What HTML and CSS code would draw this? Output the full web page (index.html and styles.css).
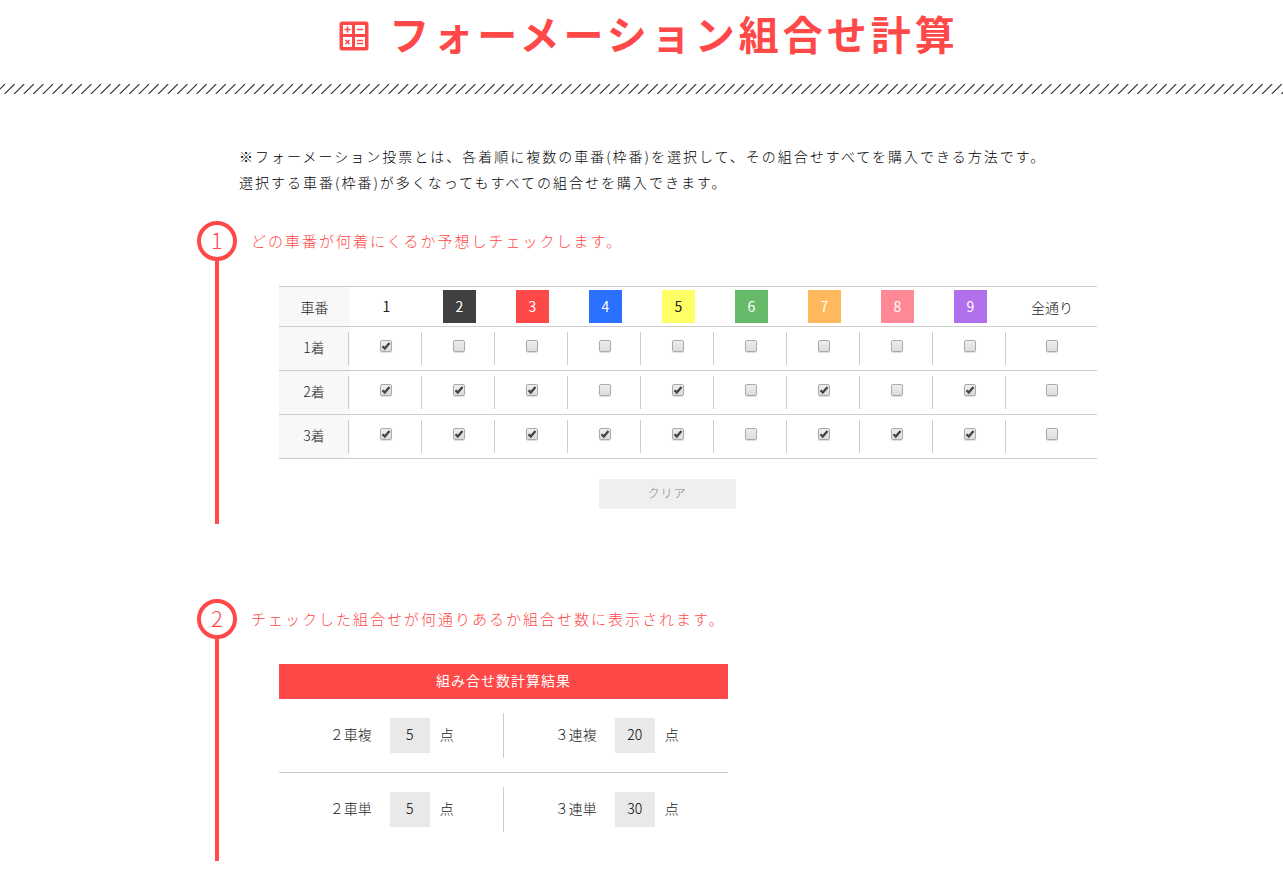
FILE: index.html
```html
<!DOCTYPE html>
<html lang="ja">
<head>
  <meta charset="UTF-8">
  <meta name="viewport" content="width=device-width, initial-scale=1.0">
  <title>フォーメーション組合せ計算</title>
  <link rel="stylesheet" href="styles.css">
</head>
<body>
  <header>
    <h1 class="title">
      <svg class="title-icon" viewBox="0 0 30 30" aria-hidden="true">
        <rect x="0.5" y="0.5" width="29" height="29" rx="2.5" fill="#ff4848"/>
        <path fill="#fff" d="M4 4h9v9H4zM16 4h10v9H16zM4 16h9v10H4zM16 16h10v10H16z"/>
        <path fill="none" stroke="#ff4848" stroke-width="1.6" d="M5.5 8.5h6M8.5 5.5v6M18 8.5h6M18 19.5h6M18 22.5h6M6.5 19l4 4M10.5 19l-4 4"/>
      </svg>
      <span>フォーメーション組合せ計算</span>
    </h1>
    <svg class="stripe" aria-hidden="true">
      <defs>
        <pattern id="stripe" width="48" height="10" patternUnits="userSpaceOnUse">
          <path stroke="#333" stroke-width="1.1" d="M5 0l-10 10M14.6 0l-10 10M24.2 0l-10 10M33.8 0l-10 10M43.4 0l-10 10M53 0l-10 10"/>
        </pattern>
      </defs>
      <rect width="100%" height="10" fill="url(#stripe)"/>
    </svg>
  </header>

  <main class="container">
    <p class="lead">※フォーメーション投票とは、各着順に複数の車番(枠番)を選択して、その組合せすべてを購入できる方法です。<br>選択する車番(枠番)が多くなってもすべての組合せを購入できます。</p>

    <section class="step">
      <div class="marker"><span class="number">1</span></div>
      <div class="step-body">
        <h2>どの車番が何着にくるか予想しチェックします。</h2>
        <form id="picks">
          <div class="indent">
            <table class="picks">
              <thead>
                <tr>
                  <th class="rank" scope="col">車番</th>
                  <th scope="col"><span class="car">1</span></th>
                  <th scope="col"><span class="car black">2</span></th>
                  <th scope="col"><span class="car red">3</span></th>
                  <th scope="col"><span class="car blue">4</span></th>
                  <th scope="col"><span class="car yellow">5</span></th>
                  <th scope="col"><span class="car green">6</span></th>
                  <th scope="col"><span class="car orange">7</span></th>
                  <th scope="col"><span class="car pink">8</span></th>
                  <th scope="col"><span class="car purple">9</span></th>
                  <th class="all" scope="col">全通り</th>
                </tr>
              </thead>
              <tbody>
                <tr>
                  <th class="rank" scope="row"><div class="cell">1着</div></th>
                  <td><div class="cell"><input type="checkbox" aria-label="1着 1" checked></div></td>
                  <td><div class="cell"><input type="checkbox" aria-label="1着 2"></div></td>
                  <td><div class="cell"><input type="checkbox" aria-label="1着 3"></div></td>
                  <td><div class="cell"><input type="checkbox" aria-label="1着 4"></div></td>
                  <td><div class="cell"><input type="checkbox" aria-label="1着 5"></div></td>
                  <td><div class="cell"><input type="checkbox" aria-label="1着 6"></div></td>
                  <td><div class="cell"><input type="checkbox" aria-label="1着 7"></div></td>
                  <td><div class="cell"><input type="checkbox" aria-label="1着 8"></div></td>
                  <td><div class="cell"><input type="checkbox" aria-label="1着 9"></div></td>
                  <td class="all"><div class="cell"><input type="checkbox" aria-label="1着 全通り"></div></td>
                </tr>
                <tr>
                  <th class="rank" scope="row"><div class="cell">2着</div></th>
                  <td><div class="cell"><input type="checkbox" aria-label="2着 1" checked></div></td>
                  <td><div class="cell"><input type="checkbox" aria-label="2着 2" checked></div></td>
                  <td><div class="cell"><input type="checkbox" aria-label="2着 3" checked></div></td>
                  <td><div class="cell"><input type="checkbox" aria-label="2着 4"></div></td>
                  <td><div class="cell"><input type="checkbox" aria-label="2着 5" checked></div></td>
                  <td><div class="cell"><input type="checkbox" aria-label="2着 6"></div></td>
                  <td><div class="cell"><input type="checkbox" aria-label="2着 7" checked></div></td>
                  <td><div class="cell"><input type="checkbox" aria-label="2着 8"></div></td>
                  <td><div class="cell"><input type="checkbox" aria-label="2着 9" checked></div></td>
                  <td class="all"><div class="cell"><input type="checkbox" aria-label="2着 全通り"></div></td>
                </tr>
                <tr>
                  <th class="rank" scope="row"><div class="cell">3着</div></th>
                  <td><div class="cell"><input type="checkbox" aria-label="3着 1" checked></div></td>
                  <td><div class="cell"><input type="checkbox" aria-label="3着 2" checked></div></td>
                  <td><div class="cell"><input type="checkbox" aria-label="3着 3" checked></div></td>
                  <td><div class="cell"><input type="checkbox" aria-label="3着 4" checked></div></td>
                  <td><div class="cell"><input type="checkbox" aria-label="3着 5" checked></div></td>
                  <td><div class="cell"><input type="checkbox" aria-label="3着 6"></div></td>
                  <td><div class="cell"><input type="checkbox" aria-label="3着 7" checked></div></td>
                  <td><div class="cell"><input type="checkbox" aria-label="3着 8" checked></div></td>
                  <td><div class="cell"><input type="checkbox" aria-label="3着 9" checked></div></td>
                  <td class="all"><div class="cell"><input type="checkbox" aria-label="3着 全通り"></div></td>
                </tr>
              </tbody>
            </table>
          </div>
          <button type="button" class="clear" onclick="clearAll()">クリア</button>
        </form>
      </div>
    </section>

    <section class="step">
      <div class="marker"><span class="number">2</span></div>
      <div class="step-body">
        <h2>チェックした組合せが何通りあるか組合せ数に表示されます。</h2>
        <div class="indent">
          <div class="results">
            <h3>組み合せ数計算結果</h3>
            <div class="result-row">
              <div class="result">
                <label for="quinella">２車複</label>
                <input type="text" id="quinella" value="5" readonly>
                <span>点</span>
              </div>
              <div class="result">
                <label for="trio">３連複</label>
                <input type="text" id="trio" value="20" readonly>
                <span>点</span>
              </div>
            </div>
            <div class="result-row">
              <div class="result">
                <label for="exacta">２車単</label>
                <input type="text" id="exacta" value="5" readonly>
                <span>点</span>
              </div>
              <div class="result">
                <label for="trifecta">３連単</label>
                <input type="text" id="trifecta" value="30" readonly>
                <span>点</span>
              </div>
            </div>
          </div>
        </div>
      </div>
    </section>
  </main>

  <script>
    const form = document.getElementById("picks");
    const rows = [...form.querySelectorAll("tbody tr")].map(tr => [...tr.querySelectorAll("input")]);

    function calculate() {
      const [first, second, third] = rows.map(row => row.slice(0, 9).map((box, i) => box.checked ? i + 1 : 0).filter(Boolean));
      const exacta = new Set(), quinella = new Set(), trifecta = new Set(), trio = new Set();
      for (const a of first) {
        for (const b of second) {
          if (a === b) continue;
          exacta.add([a, b].join());
          quinella.add([a, b].sort().join());
          for (const c of third) {
            if (c === a || c === b) continue;
            trifecta.add([a, b, c].join());
            trio.add([a, b, c].sort().join());
          }
        }
      }
      document.getElementById("exacta").value = exacta.size;
      document.getElementById("quinella").value = quinella.size;
      document.getElementById("trifecta").value = trifecta.size;
      document.getElementById("trio").value = trio.size;
    }

    function clearAll() {
      rows.flat().forEach(box => box.checked = false);
      calculate();
    }

    rows.forEach(row => {
      row[9].addEventListener("change", () => {
        row.forEach(box => box.checked = row[9].checked);
      });
    });
    form.addEventListener("change", calculate);
  </script>
</body>
</html>
```
FILE: styles.css
```css
* {
  box-sizing: border-box;
}
body {
  margin: 0;
  background-color: #fff;
  color: #222;
  font-family: "Noto Sans CJK JP", sans-serif;
  font-weight: 300;
  font-size: 14px;
}
h1, h2, h3, p {
  margin: 0;
}
.title {
  display: flex;
  justify-content: center;
  align-items: center;
  height: 72px;
  padding-left: 15px;
  gap: 20px;
  color: #ff4848;
  font-size: 40px;
  font-weight: 700;
  line-height: 60px;
  letter-spacing: 4px;
}
.title span {
  padding-bottom: 6px;
}
.title-icon {
  width: 30px;
  height: 30px;
}
.stripe {
  display: block;
  width: 100%;
  height: 10px;
  margin-top: 12px;
}
.container {
  max-width: 911px;
  margin: 0 auto;
  padding: 49px 0 32px 11px;
}
.lead {
  padding-left: 42px;
  margin-bottom: 26px;
  color: #000;
  line-height: 26px;
  letter-spacing: 2px;
}
.step {
  display: flex;
}
.step + .step {
  margin-top: 75px;
}
.marker {
  display: flex;
  flex-direction: column;
  align-items: center;
  width: 40px;
}
.marker::after {
  content: "";
  flex: 1;
  width: 4px;
  background-color: #ff4848;
}
.number {
  width: 40px;
  height: 40px;
  border: 4px solid #ff4848;
  border-radius: 50%;
  color: #ff4848;
  font-size: 22px;
  line-height: 29px;
  text-align: center;
}
.step-body {
  flex: 1;
  padding-bottom: 15px;
}
.step h2 {
  margin: 0 0 25px 14px;
  color: #ff4848;
  font-size: 15px;
  font-weight: 300;
  line-height: 40px;
  letter-spacing: 2px;
}
.indent {
  padding-left: 42px;
}

/* picks */
.picks {
  width: 100%;
  border-collapse: separate;
  border-spacing: 0;
  border-top: 1px solid #ccc;
  table-layout: fixed;
}
.picks th,
.picks td {
  padding: 5px 1px;
  border-bottom: 1px solid #ccc;
  font-weight: 300;
  text-align: center;
}
.picks thead th {
  padding: 3px 0;
  line-height: 32px;
}
.picks .rank {
  width: 71px;
  background-color: #f8f8f8;
}
.picks .all {
  width: 90px;
}
.car {
  display: block;
  width: 33px;
  height: 33px;
  margin: 0 auto;
  font-weight: 400;
}
.black, .red, .blue, .green, .orange, .pink, .purple {
  color: #fff;
}
.black { background-color: #404040; }
.red { background-color: #ff4848; }
.blue { background-color: #2b70ff; }
.yellow { background-color: #ffff66; }
.green { background-color: #66bb6a; }
.orange { background-color: #ffb85c; }
.pink { background-color: #ff8896; }
.purple { background-color: #b070eb; }
.cell {
  display: flex;
  justify-content: center;
  align-items: center;
  height: 33px;
  padding-bottom: 4px;
  border-right: 1px solid #ccc;
}
.all .cell {
  border-right: none;
}
.picks input {
  appearance: none;
  width: 12px;
  height: 12px;
  margin: 0 0 1px;
  border: 1px solid #aaa;
  border-radius: 2px;
  background: linear-gradient(#eee, #dcdcdc);
  box-shadow: 0 1px 1px #ddd;
}
.picks input:checked {
  background: url("data:image/svg+xml,%3Csvg xmlns='http://www.w3.org/2000/svg' viewBox='0 0 10 10'%3E%3Cpath d='M1.5 5.2 3.8 7.5 8.5 2' fill='none' stroke='%23444' stroke-width='2.3'/%3E%3C/svg%3E"), linear-gradient(#eee, #dcdcdc);
}
.clear {
  display: block;
  width: 137px;
  height: 30px;
  margin: 20px auto 0;
  padding: 0 0 3px;
  border: none;
  background-color: #efefef;
  color: #888;
  font-family: inherit;
  font-size: 12px;
  font-weight: 300;
  letter-spacing: 1px;
  cursor: pointer;
}

/* results */
.results {
  max-width: 449px;
}
.results h3 {
  padding-bottom: 2px;
  background-color: #ff4848;
  color: #fff;
  font-size: 14px;
  font-weight: 400;
  line-height: 33px;
  letter-spacing: 1px;
  text-align: center;
}
.result-row {
  display: flex;
  padding: 14px 0;
}
.result-row + .result-row {
  border-top: 1px solid #ccc;
}
.result {
  width: 50%;
  display: flex;
  justify-content: center;
  align-items: center;
  height: 45px;
  padding-left: 2px;
}
.result:first-child {
  border-right: 1px solid #ccc;
}
.result label,
.result span {
  padding-bottom: 4px;
}
.result input {
  width: 40px;
  height: 35px;
  margin: 0 10px 0 18px;
  padding: 0 0 3px;
  border: none;
  background-color: #e9e9e9;
  color: #000;
  font-family: inherit;
  font-size: 14px;
  font-weight: 300;
  text-align: center;
}
```
